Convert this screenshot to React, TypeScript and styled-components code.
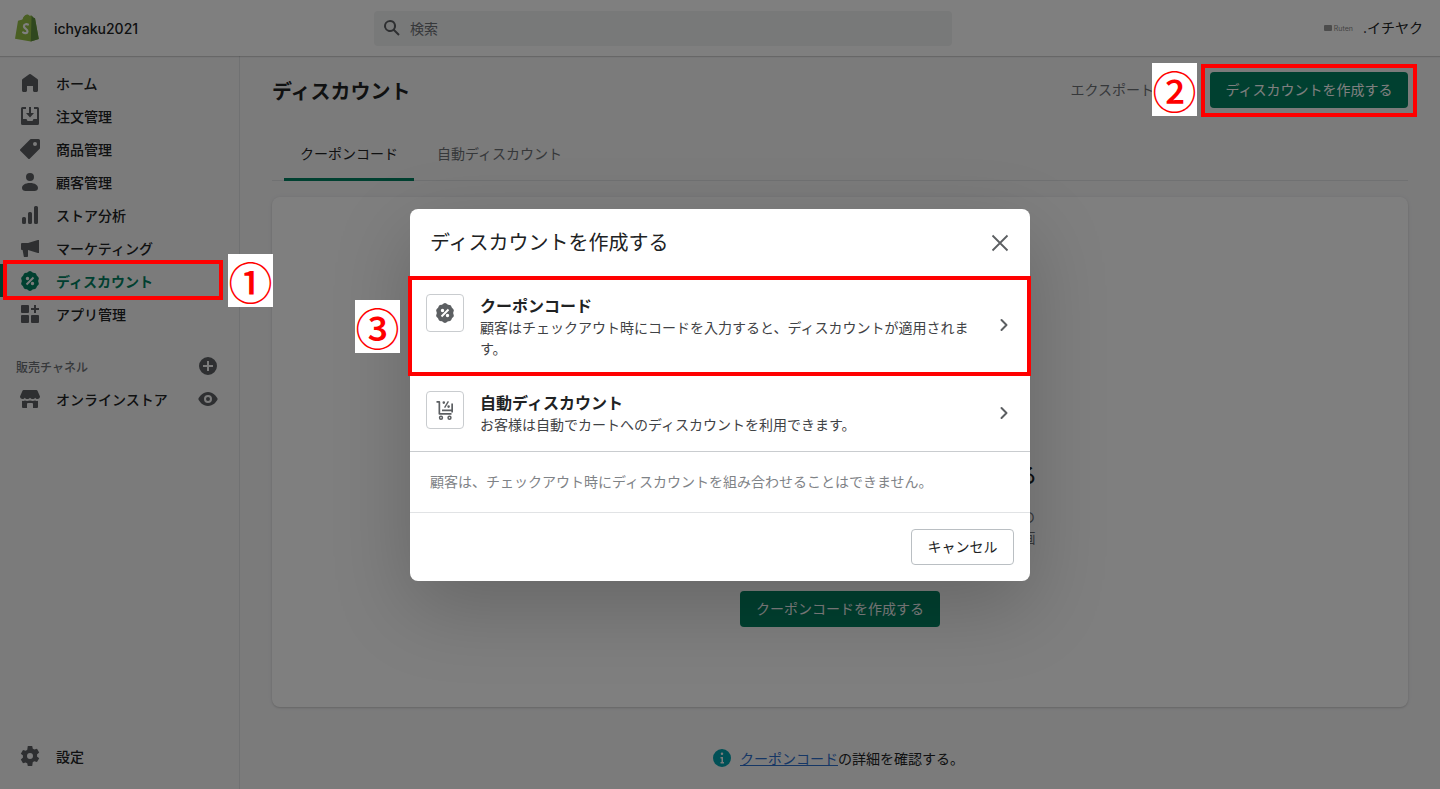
import { createGlobalStyle } from "styled-components";
import styled from "styled-components";
import { ReactNode } from "react";

const GlobalStyle = createGlobalStyle`
  html, body {
    margin: 0;
    padding: 0;
    height: 100%;
    background: #f6f6f7;
    overflow: hidden;
  }
  body {
    font-family: Inter, "Noto Sans CJK JP", sans-serif;
    color: #202223;
  }
`;

const Icon = ({ d, size = 20, color = "currentColor" }: { d: string; size?: number; color?: string }) => (
  <svg width={size} height={size} viewBox="0 0 20 20" fill={color} fillRule="evenodd">
    <path d={d} />
  </svg>
);

const ICONS = {
  home: "M18 7.261V17.5c0 .841-.672 1.5-1.5 1.5h-2c-.828 0-1.5-.659-1.5-1.5V13H7v4.477C7 18.318 6.328 19 5.5 19h-2c-.828 0-1.5-.682-1.5-1.523V7.261a1.5 1.5 0 0 1 .615-1.21l6.59-4.82a1.481 1.481 0 0 1 1.59 0l6.59 4.82A1.5 1.5 0 0 1 18 7.26z",
  orders:
    "M1 2.5A1.5 1.5 0 0 1 2.5 1H6v2H3v10h3.5l1 2h5l1-2H17V3h-3V1h3.5A1.5 1.5 0 0 1 19 2.5v15a1.5 1.5 0 0 1-1.5 1.5h-15A1.5 1.5 0 0 1 1 17.5v-15zM9 1h2v6h3l-4 4.5L6 7h3V1z",
  tag: "M18.5 0H11a1 1 0 0 0-.7.3L.3 10.3a1 1 0 0 0 0 1.4l8 8a1 1 0 0 0 1.4 0l10-10A1 1 0 0 0 20 9V1.5A1.5 1.5 0 0 0 18.5 0zM15 7a2 2 0 1 1 0-4 2 2 0 0 1 0 4z",
  customer:
    "M10 9a4 4 0 1 0 0-8 4 4 0 0 0 0 8zM10 11c-5 0-8 2.2-8 5 0 1.8 1.5 3 3.5 3h9c2 0 3.5-1.2 3.5-3 0-2.8-3-5-8-5z",
  analytics:
    "M2 13.5A1.5 1.5 0 0 1 3.5 12h1A1.5 1.5 0 0 1 6 13.5v4A1.5 1.5 0 0 1 4.5 19h-1A1.5 1.5 0 0 1 2 17.5v-4zM8 8.5A1.5 1.5 0 0 1 9.5 7h1A1.5 1.5 0 0 1 12 8.5v9a1.5 1.5 0 0 1-1.5 1.5h-1A1.5 1.5 0 0 1 8 17.5v-9zM14 2.5A1.5 1.5 0 0 1 15.5 1h1A1.5 1.5 0 0 1 18 2.5v15a1.5 1.5 0 0 1-1.5 1.5h-1a1.5 1.5 0 0 1-1.5-1.5v-15z",
  marketing:
    "M19 2v13h-1.2L8 12v6.2c0 .5-.4.8-.8.8H4.6c-.4 0-.7-.3-.8-.6L2.6 12H2a1 1 0 0 1-1-1V6a1 1 0 0 1 1-1h6l9.8-3H19z",
  discount:
    "M10 0c1 0 1.8.9 2.6 1.4.9.5 2.100.3 2.900.8.8.6 1 1.800 1.500 2.600.5.8 1.600 1.400 1.800 2.300.2 1 -.6 1.900-.6 2.900s.8 1.900.6 2.900c-.2.900-1.300 1.500-1.800 2.300-.5.800-.7 2-1.500 2.600-.8.5-2 .3-2.900.8C11.800 19.100 11 20 10 20s-1.800-.9-2.600-1.400c-.9-.5-2.100-.3-2.900-.8-.8-.6-1-1.800-1.500-2.600C2.500 14.400 1.400 13.800 1.200 12.900 1 11.900 1.800 11 1.800 10S1 8.100 1.200 7.100c.2-.9 1.300-1.500 1.800-2.300.5-.8.700-2 1.500-2.600.8-.5 2-.3 2.900-.8C8.200.9 9 0 10 0zM12.800 5.800L5.800 12.800 7.200 14.200 14.200 7.200 12.800 5.800zM7.500 5.800a1.700 1.700 0 1 0 0 3.400 1.700 1.700 0 0 0 0-3.400zm5 5a1.700 1.700 0 1 0 0 3.400 1.700 1.700 0 0 0 0-3.400z",
  apps: "M1 2a1 1 0 0 1 1-1h6a1 1 0 0 1 1 1v6a1 1 0 0 1-1 1H2a1 1 0 0 1-1-1V2zM1 12a1 1 0 0 1 1-1h6a1 1 0 0 1 1 1v6a1 1 0 0 1-1 1H2a1 1 0 0 1-1-1v-6zM11 12a1 1 0 0 1 1-1h6a1 1 0 0 1 1 1v6a1 1 0 0 1-1 1h-6a1 1 0 0 1-1-1v-6zM14 1h2v3h3v2h-3v3h-2V6h-3V4h3V1z",
  plus: "M10 1a9 9 0 1 0 0 18 9 9 0 0 0 0-18zm1 4v4h4v2h-4v4H9v-4H5V9h4V5h2z",
  eye: "M10 3C5 3 1.500 7 .3 10c1.200 3 4.700 7 9.700 7s8.500-4 9.700-7C18.500 7 15 3 10 3zm0 11a4 4 0 1 1 0-8 4 4 0 0 1 0 8zm0-2a2 2 0 1 0 0-4 2 2 0 0 0 0 4z",
  store:
    "M3.500 1h13c.4 0 .8.300 1 .7L20 7.500c0 1.400-1.100 2.500-2.500 2.500-1 0-1.800-.5-2.300-1.300-.5.800-1.300 1.300-2.600 1.300-1 0-1.900-.5-2.600-1.300-.7.800-1.600 1.300-2.600 1.300-1.300 0-2.100-.5-2.600-1.300C4.300 9.500 3.500 10 2.500 10 1.100 10 0 8.900 0 7.500l2.500-5.800c.2-.4.600-.7 1-.7zM2 11.700c.9.300 2.200.3 3-.2.900.6 2.700.7 5 0 2 .7 4 .6 5 0 .8.500 2.100.500 3 .2V18a1 1 0 0 1-1 1h-4v-4a1 1 0 0 0-1-1H8a1 1 0 0 0-1 1v4H3a1 1 0 0 1-1-1v-6.300z",
  gear: "M7.800 0h4.400l.6 2.800c.5.200 1 .5 1.400.8l2.800-.9 2.200 3.800-2.200 1.900c.1.700.1 1.300 0 2l2.200 1.900-2.200 3.800-2.800-.9c-.4.300-.9.600-1.400.8L12.200 20H7.800l-.6-2.800c-.5-.2-1-.5-1.400-.8l-2.800.9-2.200-3.800 2.200-1.900c-.1-.7-.1-1.300 0-2L.8 7.700 3 3.900l2.800.9c.4-.3.900-.6 1.400-.8L7.800 0zM10 7a3 3 0 1 0 0 6 3 3 0 0 0 0-6z",
  search:
    "M8 2a6 6 0 1 0 3.500 10.900l4.800 4.800 1.400-1.400-4.800-4.800A6 6 0 0 0 8 2zm0 2a4 4 0 1 1 0 8 4 4 0 0 1 0-8z",
  info: "M10 1a9 9 0 1 0 0 18 9 9 0 0 0 0-18zm0 3.500a1.250 1.250 0 1 1 0 2.500 1.250 1.250 0 0 1 0-2.500zM8.500 9h2.500v5h1v1.500H8.500V14h1v-3.500h-1V9z",
  cart: "M1.500 1h2.700a1 1 0 0 1 1 1v11h11.300v1.700H4.500a1 1 0 0 1-1-1V2.700h-2V1zM6 15.500a2.200 2.200 0 1 1 0 4.400 2.200 2.200 0 0 1 0-4.400zm0 1.500a.7.700 0 1 0 0 1.400.7.700 0 0 0 0-1.400zM14.500 15.500a2.200 2.200 0 1 1 0 4.400 2.200 2.200 0 0 1 0-4.400zm0 1.500a.7.700 0 1 0 0 1.400.7.700 0 0 0 0-1.400zM16.300 3.500H18v9h-1.700v-1.300H7v-1.700h9.300V3.500zM12.800 1l1.200.8-3.800 6.200-1.200-.8L12.800 1zM8.800 1.300a1.300 1.300 0 1 1 0 2.600 1.300 1.300 0 0 1 0-2.600zM13.600 5.300a1.300 1.300 0 1 1 0 2.600 1.300 1.300 0 0 1 0-2.600z",
};

const navItems: { label: string; icon: keyof typeof ICONS; active?: boolean }[] = [
  { label: "ホーム", icon: "home" },
  { label: "注文管理", icon: "orders" },
  { label: "商品管理", icon: "tag" },
  { label: "顧客管理", icon: "customer" },
  { label: "ストア分析", icon: "analytics" },
  { label: "マーケティング", icon: "marketing" },
  { label: "ディスカウント", icon: "discount", active: true },
  { label: "アプリ管理", icon: "apps" },
];

const ShopifyLogo = () => (
  <svg width="24" height="28" viewBox="0 0 24 28">
    <path d="M3 6.800 7.500 5.400C8.200 2.500 10 .6 12 .5c1.200-.1 2 .5 2.500 1.300L16.600 1.400 18.200 3.500 20 4.200 23.800 25 15.800 27.500 0 24.700 3 6.800z" fill="#95bf47" />
    <path d="M16.600 1.400 18.200 3.500 20 4.200 23.800 25 15.800 27.500 16.600 1.400z" fill="#5e8e3e" />
    <path d="M12.900 10.500c-.8-.4-3.900-.8-4 1.800-.1 2.600 3.700 2.700 3.600 5.100-.1 2.100-2.800 2.100-4.400 1" fill="none" stroke="#fff" strokeWidth="2.200" strokeLinecap="round" />
    <path d="M8 6c.4-2 1.700-4 3.500-4.600M12.400 5c0-1.200-.2-2.800-1-3.600" fill="none" stroke="#95bf47" strokeWidth="0.800" />
  </svg>
);

const Nav = ({ icon, label, active, trailing }: { icon: keyof typeof ICONS; label: string; active?: boolean; trailing?: ReactNode }) => (
  <NavRow $active={active}>
    <NavIcon $active={active}>
      <Icon d={ICONS[icon]} />
    </NavIcon>
    <NavLabel>{label}</NavLabel>
    {trailing}
  </NavRow>
);

const App = () => {
  return (
    <Page>
      <GlobalStyle />
      <TopBar>
        <Brand>
          <ShopifyLogo />
          <ShopName>ichyaku2021</ShopName>
        </Brand>
        <SearchBox>
          <Icon d={ICONS.search} color="#5c5f62" />
          <span>検索</span>
        </SearchBox>
        <Account>
          <RutenMark>
            <RutenBadge />
            Ruten
          </RutenMark>
          <AccountName>.イチヤク</AccountName>
        </Account>
      </TopBar>

      <Body>
        <Sidebar>
          {navItems.map((each) => (
            <Nav key={each.label} icon={each.icon} label={each.label} active={each.active} />
          ))}
          <ChannelHead>
            <span>販売チャネル</span>
            <Icon d={ICONS.plus} color="#5c5f62" />
          </ChannelHead>
          <Nav
            icon="store"
            label="オンラインストア"
            trailing={
              <NavTrailing>
                <Icon d={ICONS.eye} color="#5c5f62" />
              </NavTrailing>
            }
          />
          <SidebarBottom>
            <Nav icon="gear" label="設定" />
          </SidebarBottom>
        </Sidebar>

        <Main>
          <PageHeader>
            <PageTitle>ディスカウント</PageTitle>
            <HeaderActions>
              <PlainAction>エクスポート</PlainAction>
              <PrimaryButton $width={198}>ディスカウントを作成する</PrimaryButton>
            </HeaderActions>
          </PageHeader>

          <Tabs>
            <Tab $active>クーポンコード</Tab>
            <Tab>自動ディスカウント</Tab>
          </Tabs>

          <Card>
            <CardHeading>ディスカウントコードと自動ディスカウントを管理する</CardHeading>
            <CardText>
              お客様向けのディスカウントコードを作成して、オンラインの
              <br />
              ストアの売上を伸ばしましょう。割引は期間を決め促進の計画
              <br />
              に合わせて設定できます。
            </CardText>
            <PrimaryButton $width={200}>クーポンコードを作成する</PrimaryButton>
          </Card>

          <HelpLine>
            <Icon d={ICONS.info} color="#00a0ac" />
            <span>
              <HelpLink>クーポンコード</HelpLink>の詳細を確認する。
            </span>
          </HelpLine>
        </Main>
      </Body>

      <Backdrop>
        <Modal>
          <ModalHeader>
            <ModalTitle>ディスカウントを作成する</ModalTitle>
            <svg width="20" height="20" viewBox="0 0 20 20" stroke="#5c5f62" strokeWidth="1.800">
              <path d="M2.500 2.500l15 15M17.500 2.500l-15 15" />
            </svg>
          </ModalHeader>
          <OptionRow>
            <OptionIcon>
              <Icon d={ICONS.discount} color="#5c5f62" />
            </OptionIcon>
            <OptionBody>
              <OptionTitle>クーポンコード</OptionTitle>
              <OptionText>顧客はチェックアウト時にコードを入力すると、ディスカウントが適用されます。</OptionText>
            </OptionBody>
            <Chevron />
          </OptionRow>
          <OptionRow $divider>
            <OptionIcon>
              <Icon d={ICONS.cart} color="#5c5f62" />
            </OptionIcon>
            <OptionBody>
              <OptionTitle>自動ディスカウント</OptionTitle>
              <OptionText>お客様は自動でカートへのディスカウントを利用できます。</OptionText>
            </OptionBody>
            <Chevron />
          </OptionRow>
          <ModalNote>顧客は、チェックアウト時にディスカウントを組み合わせることはできません。</ModalNote>
          <ModalFooter>
            <CancelButton>キャンセル</CancelButton>
          </ModalFooter>
        </Modal>
      </Backdrop>

      <Highlight $x={3} $y={260} $w={220} $h={40} />
      <Highlight $x={1201} $y={64} $w={216} $h={53} />
      <Highlight $x={408} $y={276} $w={623} $h={100} />
      <StepMark $x={228} $y={254}>①</StepMark>
      <StepMark $x={1152} $y={63}>②</StepMark>
      <StepMark $x={355} $y={300}>③</StepMark>
    </Page>
  );
};

const Chevron = () => (
  <ChevronWrap>
    <svg width="20" height="20" viewBox="0 0 20 20" fill="none" stroke="#5c5f62" strokeWidth="2" strokeLinecap="round" strokeLinejoin="round">
      <path d="M7.500 5l5 5-5 5" />
    </svg>
  </ChevronWrap>
);

const Page = styled.div`
  position: relative;
  display: flex;
  flex-direction: column;
  height: 100vh;
  overflow: hidden;
`;

const TopBar = styled.header`
  display: grid;
  grid-template-columns: 374px 578px 1fr;
  align-items: center;
  height: 56px;
  box-sizing: border-box;
  background: #ffffff;
  box-shadow: 0 1px 1px rgba(0, 0, 0, 0.16);
  position: relative;
  z-index: 1;
`;

const Brand = styled.div`
  display: flex;
  align-items: center;
  gap: 15px;
  padding-left: 15px;
`;

const ShopName = styled.span`
  font-size: 14px;
  font-weight: 500;
`;

const SearchBox = styled.div`
  display: flex;
  align-items: center;
  gap: 8px;
  height: 35px;
  padding-left: 8px;
  border-radius: 4px;
  background: #f1f2f3;
  font-size: 14px;
  color: #6d7175;
`;

const Account = styled.div`
  display: flex;
  justify-content: flex-end;
  align-items: center;
  gap: 10px;
  padding-right: 17px;
`;

const RutenMark = styled.span`
  display: flex;
  align-items: center;
  gap: 2px;
  font-size: 7px;
  color: #888;
`;

const RutenBadge = styled.i`
  display: block;
  width: 8px;
  height: 6px;
  background: #999;
  border-radius: 1px;
`;

const AccountName = styled.span`
  font-size: 14px;
  padding-bottom: 3px;
`;

const Body = styled.div`
  display: flex;
  flex: 1;
  min-height: 0;
`;

const Sidebar = styled.nav`
  display: flex;
  flex-direction: column;
  width: 240px;
  box-sizing: border-box;
  padding-top: 10px;
  border-right: 1px solid #e1e3e5;
`;

const NavRow = styled.div<{ $active?: boolean }>`
  display: flex;
  align-items: center;
  height: 33px;
  padding-left: 20px;
  box-sizing: border-box;
  font-size: 14px;
  font-weight: ${({ $active }) => ($active ? 700 : 500)};
  color: ${({ $active }) => ($active ? "#008060" : "#202223")};
  box-shadow: ${({ $active }) => ($active ? "inset 3px 0 0 #008060" : "none")};
`;

const NavIcon = styled.span<{ $active?: boolean }>`
  display: flex;
  margin-right: 16px;
  color: ${({ $active }) => ($active ? "#008060" : "#5c5f62")};
`;

const NavLabel = styled.span`
  flex: 1;
`;

const NavTrailing = styled.span`
  display: flex;
  padding-right: 21px;
`;

const ChannelHead = styled.div`
  display: flex;
  justify-content: space-between;
  align-items: center;
  margin-top: 20px;
  height: 32px;
  padding: 0 21px 0 16px;
  font-size: 12px;
  font-weight: 500;
  color: #6d7175;
`;

const SidebarBottom = styled.div`
  margin-top: auto;
  padding-bottom: 17px;
`;

const Main = styled.main`
  display: flex;
  flex-direction: column;
  flex: 1;
  min-width: 0;
  padding: 16px 32px 0;
`;

const PageHeader = styled.div`
  display: flex;
  justify-content: space-between;
  align-items: center;
  height: 36px;
`;

const PageTitle = styled.h1`
  margin: 0;
  padding-top: 4px;
  font-size: 20px;
  font-weight: 700;
  line-height: 36px;
`;

const HeaderActions = styled.div`
  display: flex;
  align-items: center;
  gap: 56px;
`;

const PlainAction = styled.span`
  padding-bottom: 3px;
  font-size: 14px;
  color: #6d7175;
`;

const PrimaryButton = styled.div<{ $width: number }>`
  display: flex;
  justify-content: center;
  align-items: center;
  width: ${({ $width }) => $width}px;
  height: 36px;
  padding-bottom: 2px;
  box-sizing: border-box;
  flex: none;
  border-radius: 4px;
  background: #008060;
  color: #ffffff;
  font-size: 14px;
`;

const Tabs = styled.div`
  display: flex;
  gap: 7px;
  height: 56px;
  margin-top: 17px;
  padding-left: 12px;
  box-sizing: border-box;
  border-bottom: 1px solid #e1e3e5;
`;

const Tab = styled.div<{ $active?: boolean }>`
  display: flex;
  align-items: center;
  padding: 2px 16px 0;
  height: 56px;
  box-sizing: border-box;
  font-size: 14px;
  color: ${({ $active }) => ($active ? "#202223" : "#6d7175")};
  border-bottom: 3px solid ${({ $active }) => ($active ? "#008060" : "transparent")};
`;

const Card = styled.section`
  display: flex;
  flex-direction: column;
  align-items: center;
  justify-content: flex-end;
  height: 510px;
  box-sizing: border-box;
  margin-top: 16px;
  padding-bottom: 80px;
  border-radius: 8px;
  background: #ffffff;
  box-shadow: 0 0 5px rgba(23, 24, 24, 0.05), 0 1px 2px rgba(0, 0, 0, 0.15);
`;

const CardHeading = styled.h2`
  display: flex;
  justify-content: flex-end;
  width: 394px;
  margin: 0 0 16px;
  font-size: 20px;
  font-weight: 500;
  line-height: 28px;
  white-space: nowrap;
`;

const CardText = styled.p`
  margin: 0 0 22px;
  width: 392px;
  font-size: 14px;
  line-height: 21px;
  color: #6d7175;
  text-align: center;
`;

const HelpLine = styled.div`
  display: flex;
  justify-content: center;
  align-items: center;
  gap: 8px;
  margin-top: 41px;
  padding-right: 4px;
  font-size: 14px;
`;

const HelpLink = styled.span`
  color: #2c6ecb;
  text-decoration: underline;
`;

const Backdrop = styled.div`
  position: absolute;
  inset: 0;
  z-index: 2;
  display: flex;
  justify-content: center;
  padding-top: 209px;
  background: rgba(0, 0, 0, 0.5);
`;

const Modal = styled.div`
  width: 620px;
  height: 372px;
  border-radius: 8px;
  background: #ffffff;
  overflow: hidden;
  box-shadow: 0 26px 80px rgba(0, 0, 0, 0.2);
`;

const ModalHeader = styled.div`
  display: flex;
  justify-content: space-between;
  align-items: center;
  height: 68px;
  padding: 0 20px;
  border-bottom: 1px solid #e1e3e5;
  box-sizing: border-box;
`;

const ModalTitle = styled.h2`
  margin: 0;
  padding-bottom: 2px;
  font-size: 20px;
  font-weight: 400;
`;

const OptionRow = styled.div<{ $divider?: boolean }>`
  display: flex;
  align-items: flex-start;
  gap: 16px;
  box-sizing: border-box;
  padding: ${({ $divider }) => ($divider ? "15px 16px 16px" : "17px 16px 20px")};
  height: ${({ $divider }) => ($divider ? "76px" : "99px")};
  border-bottom: ${({ $divider }) => ($divider ? "1px solid #c9cccf" : "none")};
`;

const OptionIcon = styled.div`
  display: flex;
  justify-content: center;
  align-items: center;
  flex: none;
  width: 38px;
  height: 38px;
  box-sizing: border-box;
  border: 1px solid #c9cccf;
  border-radius: 4px;
`;

const OptionBody = styled.div`
  flex: 1;
  min-width: 0;
  padding-right: 4px;
`;

const OptionTitle = styled.div`
  padding-top: 1px;
  font-size: 16px;
  font-weight: 700;
  line-height: 22px;
`;

const OptionText = styled.div`
  font-size: 14px;
  line-height: 21px;
  color: #3f4245;
`;

const ChevronWrap = styled.div`
  display: flex;
  align-self: center;
  flex: none;
`;

const ModalNote = styled.div`
  display: flex;
  align-items: center;
  height: 61px;
  padding: 0 20px 2px;
  box-sizing: border-box;
  border-bottom: 1px solid #e1e3e5;
  font-size: 14px;
  color: #7f8387;
`;

const ModalFooter = styled.div`
  display: flex;
  justify-content: flex-end;
  padding: 16px;
`;

const CancelButton = styled.div`
  display: flex;
  justify-content: center;
  align-items: center;
  width: 103px;
  height: 36px;
  padding-bottom: 3px;
  box-sizing: border-box;
  border: 1px solid #babfc3;
  border-radius: 4px;
  font-size: 14px;
`;

const Highlight = styled.div<{ $x: number; $y: number; $w: number; $h: number }>`
  position: absolute;
  z-index: 3;
  left: ${({ $x }) => $x}px;
  top: ${({ $y }) => $y}px;
  width: ${({ $w }) => $w}px;
  height: ${({ $h }) => $h}px;
  box-sizing: border-box;
  border: 4px solid #ff0000;
`;

const StepMark = styled.div<{ $x: number; $y: number }>`
  position: absolute;
  z-index: 3;
  left: ${({ $x }) => $x}px;
  top: ${({ $y }) => $y}px;
  display: flex;
  justify-content: center;
  align-items: center;
  width: 45px;
  height: 53px;
  background: #ffffff;
  color: #ff0000;
  font-family: "Noto Sans CJK JP", sans-serif;
  font-size: 44px;
  font-weight: 500;
  line-height: 44px;
`;

export default App;
